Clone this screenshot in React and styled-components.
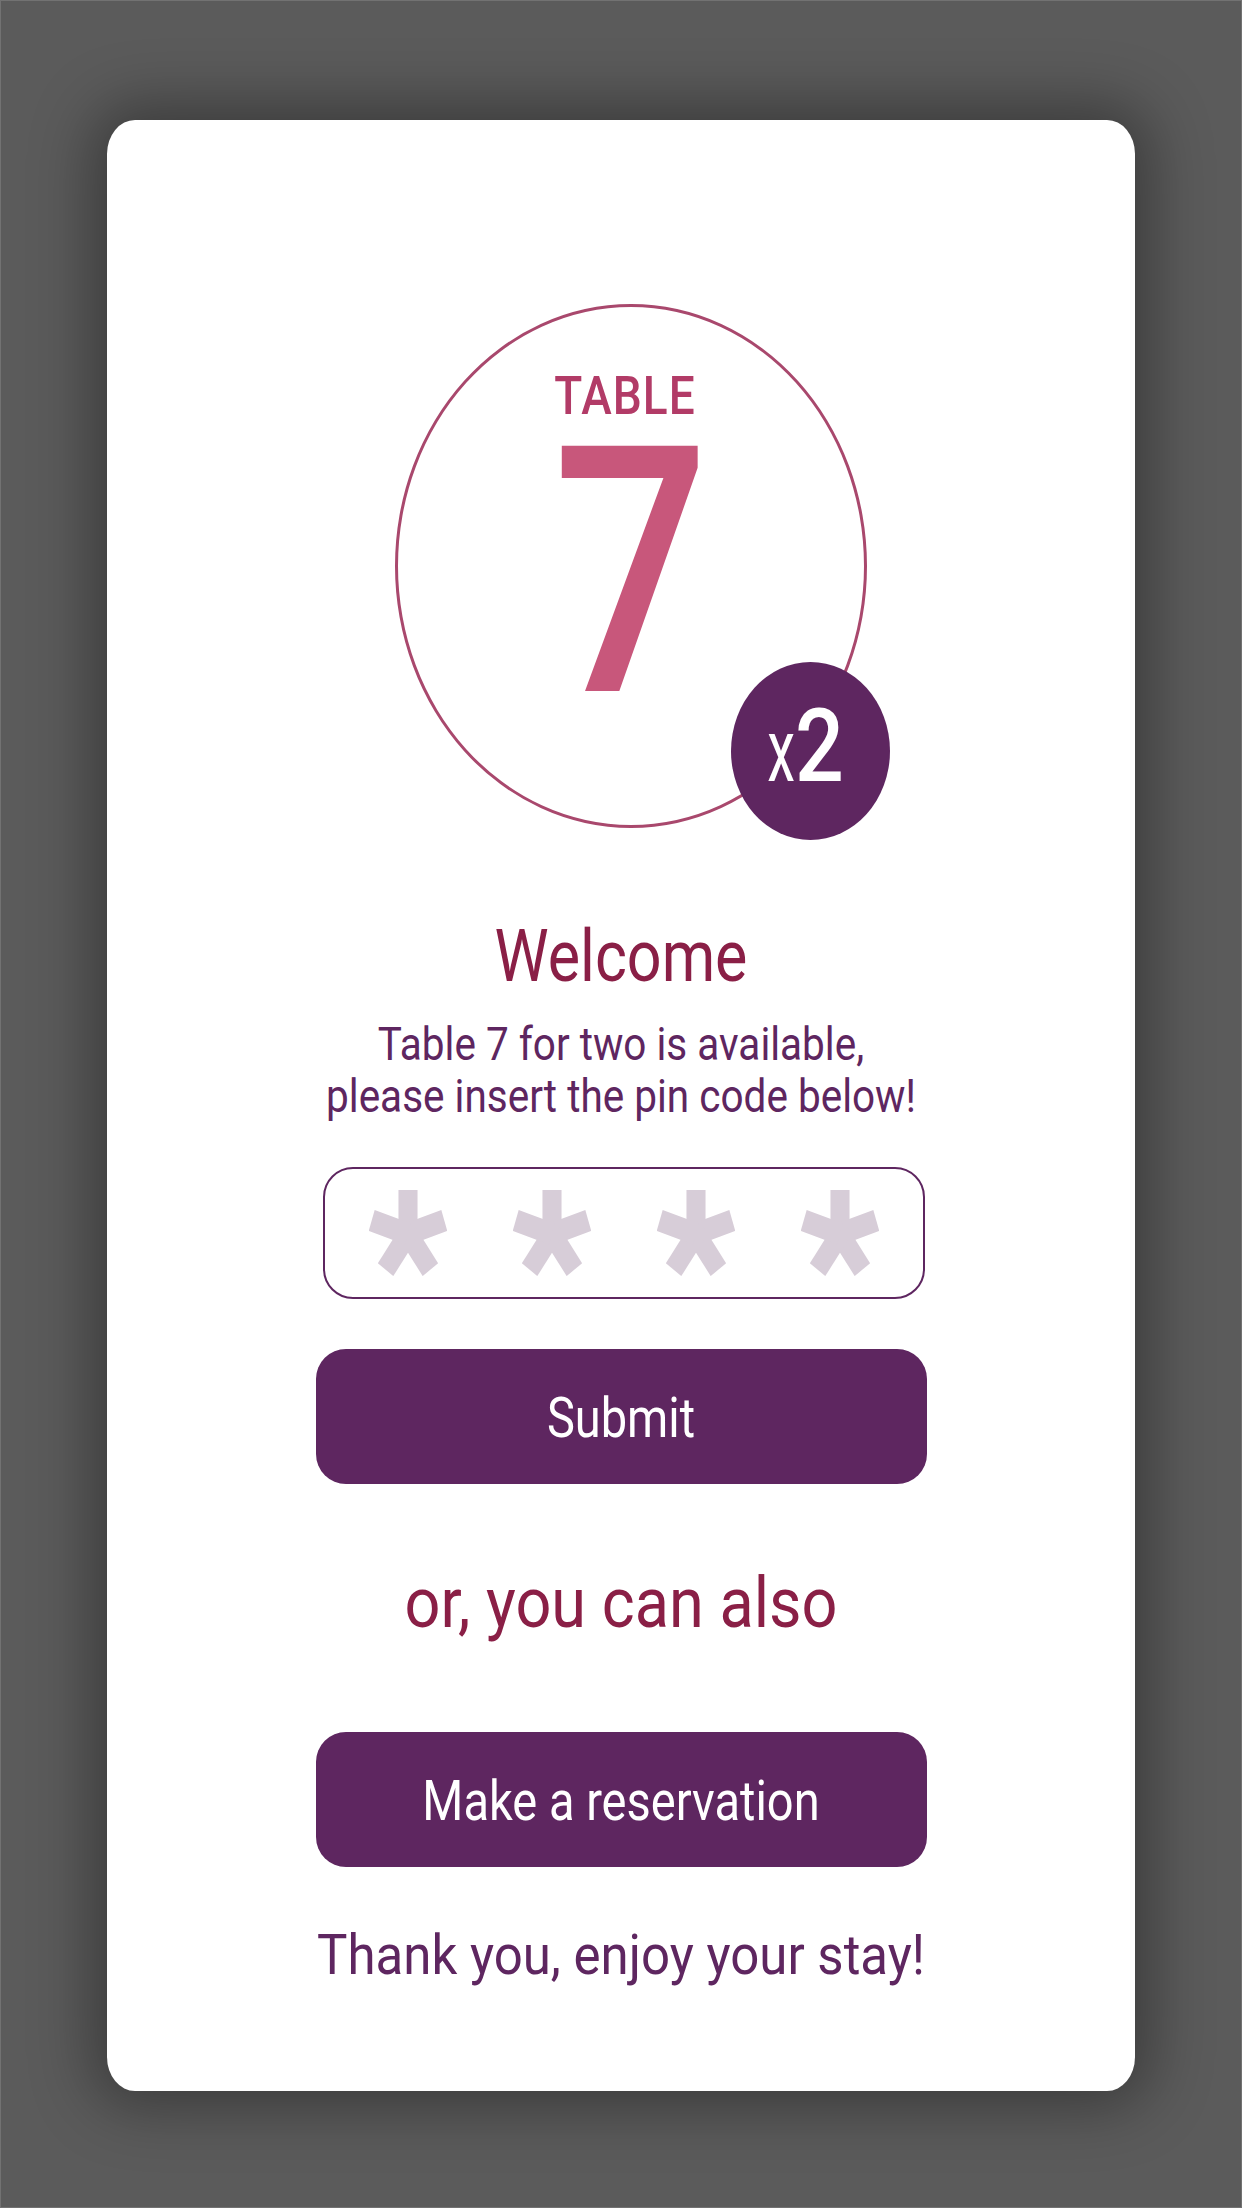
import React from 'react';
import styled, { createGlobalStyle, css } from 'styled-components';

const GlobalStyle = createGlobalStyle`
    html, body {
        margin: 0;
        padding: 0;
        background: #5b5b5b;
    }
    * {
        box-sizing: border-box;
    }
`;

// the text in the mock is drawn taller than Roboto, so glyphs get stretched
// around their own baseline (line-height is always the font size)
const tall = (size, amount) => css`
    font-size: ${size}px;
    line-height: ${size}px;
    transform: scaleY(${amount});
    transform-origin: 50% ${(size * 0.842).toFixed(1)}px;
`;

const plum = '#5e2660';
const wine = '#8a1f46';

const Page = styled.div`
    width: 1242px;
    height: 2208px;
    border: 1px solid #727272;
    padding-top: 119px;
    display: flex;
    justify-content: center;
    font-family: Roboto, "Liberation Sans", sans-serif;
`;

const Card = styled.div`
    width: 1028px;
    height: 1971px;
    background: #ffffff;
    border-radius: 28px / 34px;
    box-shadow: 0 0 60px 16px rgba(0, 0, 0, 0.35);
    padding-top: 184px;
    display: flex;
    flex-direction: column;
    align-items: center;
`;

const TableBadge = styled.div`
    position: relative;
    width: 472px;
    height: 524px;
    margin-left: 20px;
    border: 3px solid #a9486d;
    border-radius: 50%;
    padding-top: 68px;
    display: flex;
    flex-direction: column;
    align-items: center;
`;

const TableLabel = styled.div`
    ${tall(46, 1.16)}
    font-weight: 500;
    letter-spacing: 1px;
    color: #b23b67;
    margin-right: 12px;
`;

// tight line box so the big digit doesn't sit over the label
const TableNumber = styled.div`
    font-size: 276px;
    line-height: 200px;
    height: 200px;
    font-weight: 500;
    color: #c8577b;
    margin-top: 76px;
    transform: scaleY(1.25);
    transform-origin: 50% 194.4px;
`;

const Guests = styled.div`
    position: absolute;
    left: 333px;
    top: 355px;
    width: 159px;
    height: 178px;
    border-radius: 50%;
    background: ${plum};
    color: #ffffff;
    display: flex;
    justify-content: center;
    align-items: baseline;
    padding-top: 47px;
    padding-right: 10px;
`;

const GuestsX = styled.span`
    display: inline-block;
    ${tall(56, 1.6)}
`;

const GuestsCount = styled.span`
    display: inline-block;
    font-weight: 500;
    ${tall(86, 1.18)}
`;

const Welcome = styled.h1`
    margin: 102px 0 0;
    font-weight: 400;
    color: ${wine};
    ${tall(61, 1.18)}
`;

const InfoLine = styled.p`
    margin: ${p => p.$first ? '29px' : '0'} 0 0;
    font-size: 40.5px;
    line-height: 52px;
    color: ${plum};
    transform: scaleY(1.15);
    transform-origin: 50% 39.8px;
`;

const PinBox = styled.div`
    margin-top: 43px;
    margin-left: 6px;
    width: 602px;
    height: 132px;
    border: 2px solid ${plum};
    border-radius: 30px;
    display: flex;
    justify-content: center;
    align-items: center;
    gap: 66px;
`;

const ActionButton = styled.button`
    margin-top: ${p => p.$top}px;
    width: 611px;
    height: 135px;
    border: none;
    border-radius: 30px;
    background: ${plum};
    color: #ffffff;
    font-family: inherit;
    padding: 8px 0 0;
    display: flex;
    justify-content: center;
    align-items: center;
    cursor: pointer;
`;

const ButtonLabel = styled.span`
    display: block;
    ${tall(47, 1.2)}
`;

const OrLine = styled.div`
    margin-top: 90px;
    color: ${wine};
    ${tall(63, 1.12)}
`;

const ThankYou = styled.div`
    margin-top: 64px;
    color: ${plum};
    ${tall(51, 1.1)}
`;

function PinStar() {
    const arms = [0, 72, 144, 216, 288];
    return (
        <svg width="78" height="86" viewBox="-45 -44 90 86" preserveAspectRatio="none">
            {arms.map(a => (
                <line
                    key={a}
                    x1="0"
                    y1="0"
                    x2="0"
                    y2="-44"
                    stroke="#d7cdd8"
                    strokeWidth="22"
                    transform={`rotate(${a})`}
                />
            ))}
        </svg>
    );
}

export default function App() {
    return (
        <>
            <GlobalStyle />
            <Page>
                <Card>
                    <TableBadge>
                        <TableLabel>TABLE</TableLabel>
                        <TableNumber>7</TableNumber>
                        <Guests>
                            <GuestsX>x</GuestsX>
                            <GuestsCount>2</GuestsCount>
                        </Guests>
                    </TableBadge>

                    <Welcome>Welcome</Welcome>
                    <InfoLine $first>Table 7 for two is available,</InfoLine>
                    <InfoLine>please insert the pin code below!</InfoLine>

                    <PinBox>
                        <PinStar />
                        <PinStar />
                        <PinStar />
                        <PinStar />
                    </PinBox>

                    <ActionButton $top={50}>
                        <ButtonLabel>Submit</ButtonLabel>
                    </ActionButton>

                    <OrLine>or, you can also</OrLine>

                    <ActionButton $top={95}>
                        <ButtonLabel>Make a reservation</ButtonLabel>
                    </ActionButton>

                    <ThankYou>Thank you, enjoy your stay!</ThankYou>
                </Card>
            </Page>
        </>
    );
}
